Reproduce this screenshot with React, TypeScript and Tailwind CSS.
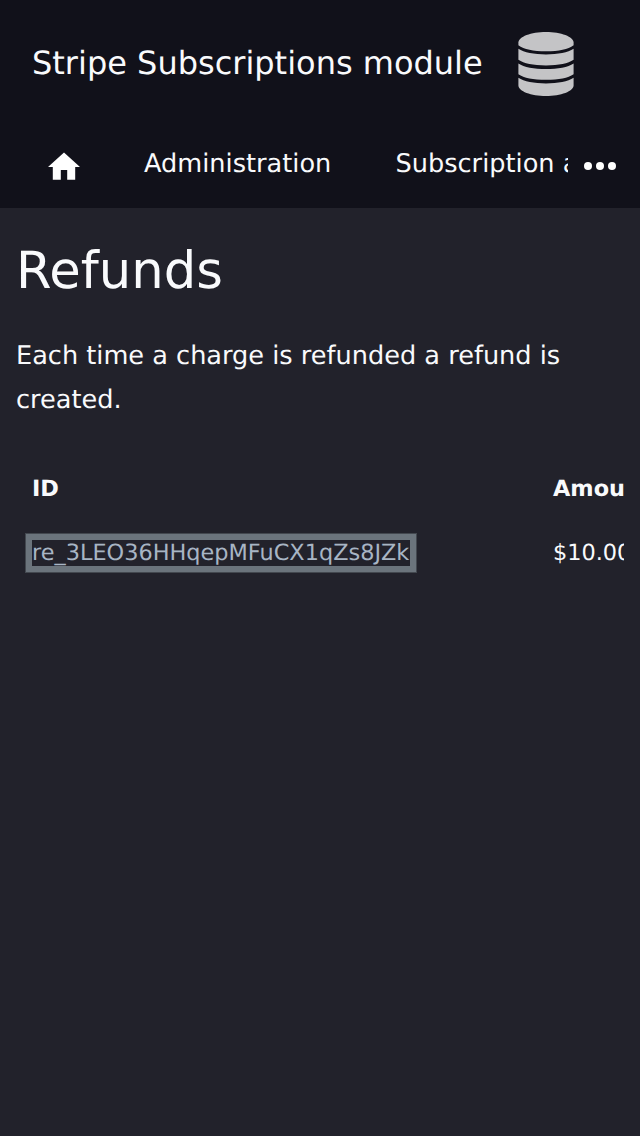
export default function App() {
  return (
    <div className="flex h-[1136px] w-[640px] flex-col overflow-hidden bg-[#22222b] font-['DejaVu_Sans',sans-serif] text-[#f9fafc] [text-rendering:geometricPrecision]">
      <header className="h-[208px] bg-[#11111a]">
        <div className="flex h-32 items-center pl-8">
          <h1 className="w-[486px] whitespace-nowrap pb-0.5 text-[32px] leading-[46px]">Stripe Subscriptions module</h1>
          <svg className="h-16 w-14" viewBox="0 0 56 64" fill="#c4c4c6">
            <path d="M28 0C43 0 55.6 4.8 55.6 10.5V13.2C50 17.4 41 19.2 28 19.2S6 17.4 .4 13.2V10.5C.4 4.8 13 0 28 0Z" />
            <path d="M.4 16.8C6 20.6 16 22.4 28 22.4S50 20.6 55.6 16.8V27.8C50 31.6 41 33.4 28 33.4S6 31.6 .4 27.8Z" />
            <path d="M.4 31.4C6 35.2 16 37 28 37S50 35.2 55.6 31.4V42.2C50 46 41 47.8 28 47.8S6 46 .4 42.2Z" />
            <path d="M.4 45.8C6 49.6 16 51.4 28 51.4S50 49.6 55.6 45.8V53.5C55.6 59.2 43 64 28 64S.4 59.2 .4 53.5Z" />
          </svg>
        </div>
        <nav className="flex h-20 text-[25.6px] leading-[38px]">
          <div className="flex w-[568px] overflow-hidden whitespace-nowrap">
            <a className="w-36 shrink-0 pl-12 pt-6">
              <svg className="size-8" viewBox="2 2.7 20 20" fill="white"><path d="M10 20v-6h4v6h5v-8h3L12 3 2 12h3v8z" /></svg>
            </a>
            <a className="w-[251.5px] shrink-0 pt-[17px]">Administration</a>
            <a className="pt-[17px]">Subscription administration</a>
          </div>
          <button className="flex h-[76px] w-16 items-center justify-center gap-1">
            <span className="size-2 rounded-full bg-white" />
            <span className="size-2 rounded-full bg-white" />
            <span className="size-2 rounded-full bg-white" />
          </button>
        </nav>
      </header>
      <main className="px-4 pt-[33px]">
        <h2 className="text-[51.2px] leading-[61px]">Refunds</h2>
        <p className="mt-8 text-[25.6px] leading-[44px]">Each time a charge is refunded a refund is created.</p>
        <div className="mt-[35px] overflow-hidden text-[22.4px] leading-[38px]">
          <table className="w-[900px] table-fixed text-left">
            <thead><tr className="h-16"><th className="w-[521px] px-4">ID</th><th className="px-4">Amount</th></tr></thead>
            <tbody><tr className="h-16"><td className="px-4"><a className="pr-px text-[#a8b5c4] outline-6 outline-[#6b747c] shadow-[0_0_0_7px_#43484f]">re_3LEO36HHqepMFuCX1qZs8JZk</a></td><td className="px-4">$10.00</td></tr></tbody>
          </table>
        </div>
      </main>
    </div>
  );
}
